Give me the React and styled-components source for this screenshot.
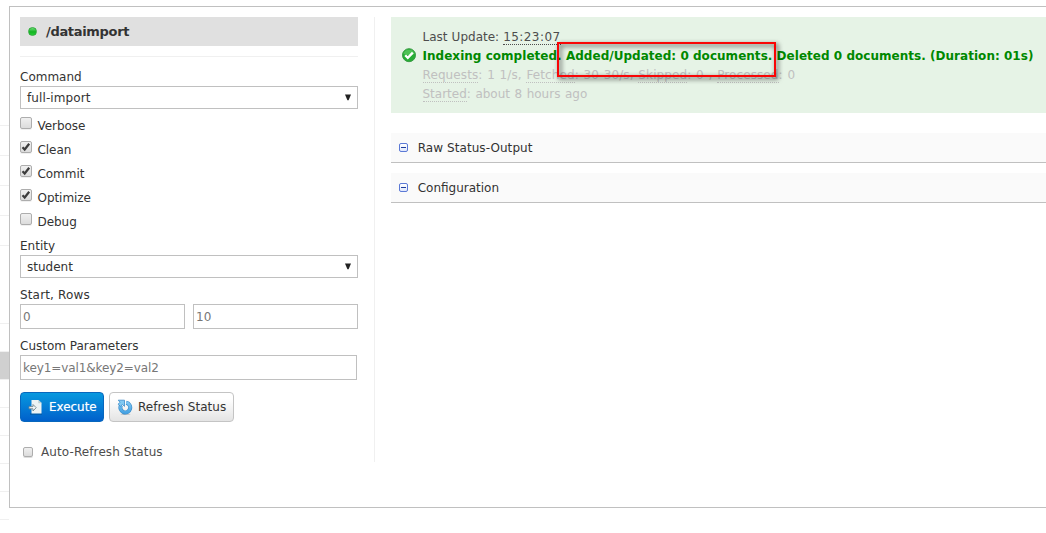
import React from "react";
import styled, { createGlobalStyle } from "styled-components";

const Global = createGlobalStyle`
  * { box-sizing: border-box; }
  body { margin: 0; background: #fff; overflow: hidden; }
`;

const Page = styled.div`
  display: flex;
  height: 533px;
  overflow: hidden;
  color: #333;
  font: 12px/18px "DejaVu Sans", Verdana, sans-serif;
`;
const Sidebar = styled.div`
  width: 9px;
  padding-top: 96px;
`;
const MenuRow = styled.div`
  height: ${(p) => p.$h}px;
  border-bottom: 1px solid ${(p) => (p.$line ? "#f0f0f0" : "transparent")};
  background: ${(p) => (p.$active ? "#d0d0d0" : "transparent")};
`;
const Panel = styled.main`
  display: flex;
  flex: 1;
  height: 502px;
  margin-top: 6px;
  padding: 10px 0 0 10px;
  border: 1px solid #c0c0c0;
  border-right: 0;
`;
const FormColumn = styled.form`
  display: flex;
  flex-direction: column;
  width: 355px;
  height: 445px;
  padding-right: 16px;
  border-right: 1px solid #f0f0f0;
`;
const Heading = styled.h2`
  display: flex;
  align-items: center;
  height: 29px;
  margin: 0 0 10px;
  padding-left: 8px;
  gap: 9px;
  background: #e0e0e0;
  font-size: 13px;
  letter-spacing: -0.32px;
`;
const StatusDot = styled.span`
  width: 9px;
  height: 9px;
  border-radius: 50%;
  border: 1px solid #2eaa3b;
  background: linear-gradient(#6bdc72, #12b322 55%, #27cf34);
`;
const Rule = styled.div`
  height: 1px;
  background: #f0f0f0;
  margin-bottom: 11px;
`;
const T = styled.span`
  letter-spacing: ${(p) => p.$ls || 0}px;
  white-space: nowrap;
`;
const Label = styled.label`
  height: 18px;
  margin-top: ${(p) => p.$mt || 0}px;
  letter-spacing: ${(p) => p.$ls || 0}px;
`;
const Select = styled.div`
  display: flex;
  align-items: center;
  justify-content: space-between;
  height: 23px;
  padding: 0 5px 0 6px;
  border: 1px solid #c0c0c0;
`;
const Checks = styled.div`
  display: flex;
  flex-direction: column;
  margin-top: 8px;
`;
const CheckRow = styled.label`
  display: flex;
  height: 24px;
  gap: 5.5px;
`;
const CheckBox = styled.span`
  display: flex;
  width: ${(p) => p.$size}px;
  height: ${(p) => p.$size}px;
  border: 1px solid #adadad;
  border-radius: 2px;
  background: linear-gradient(#f0f0f0, #dcdcdc);
  box-shadow: 0 1px 0 ${(p) => (p.$size < 12 ? "#ddd" : "#f0f0f0")};
  svg { display: block; overflow: visible; }
`;
const Fields = styled.div`
  display: grid;
  grid-template-columns: 1fr 1fr;
  gap: 8px;
`;
const Field = styled.div`
  height: 25px;
  padding: 3px 2px;
  border: 1px solid #c0c0c0;
  color: #777;
  margin-right: ${(p) => p.$inset || 0}px;
`;
const Buttons = styled.div`
  display: flex;
  gap: 5px;
  margin-top: 12px;
`;
const Button = styled.button`
  display: flex;
  align-items: center;
  width: ${(p) => p.$w}px;
  height: 30px;
  padding: 0 0 0 7px;
  gap: ${(p) => p.$gap}px;
  border: 1px solid ${(p) => (p.$primary ? "#0867bd" : "#c4c4c4")};
  border-radius: 4px;
  background: ${(p) => (p.$primary ? "linear-gradient(#0899df, #0060cb)" : "linear-gradient(#fff 20%, #e4e4e4)")};
  color: ${(p) => (p.$primary ? "#fff" : "#333")};
  text-shadow: ${(p) => (p.$primary ? "0 0 1px rgba(255, 255, 255, 0.5)" : "none")};
  font: inherit;
  white-space: nowrap;
  svg { flex: none; }
`;
const AutoRefresh = styled.label`
  display: flex;
  align-items: center;
  height: 18px;
  margin: 21px 0 0 3px;
  gap: 8px;
  color: #4d4d4d;
`;
const Content = styled.section`
  flex: 1;
  min-width: 0;
  margin-left: 16px;
`;
const Status = styled.div`
  position: relative;
  display: grid;
  grid-template-columns: 20.5px 1fr;
  grid-auto-rows: 19px;
  height: 96px;
  padding: 11px 0 0 11px;
  margin-bottom: 20px;
  background: #e6f3e6;
  line-height: 19px;
  white-space: nowrap;
`;
const Line = styled.div`
  grid-column: 2;
  color: ${(p) => p.$color};
  font-weight: ${(p) => (p.$bold ? "bold" : "normal")};
  letter-spacing: ${(p) => p.$ls || 0}px;
  word-spacing: ${(p) => p.$ws || 0}px;
`;
const Abbr = styled.abbr`
  display: inline-block;
  height: 15px;
  line-height: 15px;
  text-decoration: none;
  letter-spacing: ${(p) => (p.$ls ? `${p.$ls}px` : "inherit")};
  border-bottom: 1px dotted currentColor;
`;
const IconCell = styled.span`
  grid-column: 1;
  grid-row: 2;
  padding-top: 1px;
  svg { display: block; }
`;
const Highlight = styled.div`
  position: absolute;
  left: 166px;
  top: 25px;
  width: 219px;
  height: 35px;
  border: 2px solid #f90505;
  filter: drop-shadow(2px 2px 2.5px rgba(0, 0, 0, 0.75));
`;
const Section = styled.div`
  display: flex;
  align-items: center;
  height: 30px;
  margin-bottom: 10px;
  padding-left: 8px;
  gap: 9.7px;
  border-bottom: 1px solid #c0c0c0;
  background: #fafafa;
`;
const Collapse = styled.span`
  display: flex;
  align-items: center;
  justify-content: center;
  width: 9px;
  height: 9px;
  margin-top: -1px;
  border: 1px solid #5b79d6;
  border-radius: 2px;
  background: linear-gradient(#fff, #dfe7fb);
  &::before { content: ""; width: 5px; height: 1px; background: #1d3c9c; }
`;

const Check = () => (
  <svg width="10" height="10" viewBox="0 0 10 10">
    <path d="M1.5 5.2 L3.7 7.5 L8.2 1.8" fill="none" stroke="#3c3c3c" strokeWidth="2.2" />
  </svg>
);
const Arrow = () => (
  <svg width="8" height="8" viewBox="0 0 8 8">
    <path d="M1 0.6h6L4.6 6.3H3.4z" fill="#222" />
  </svg>
);
const ImportIcon = () => (
  <svg width="16" height="16" viewBox="0 0 16 16">
    <path d="M2 15h12" stroke="#064a80" strokeWidth="1.2" opacity=".65" />
    <path d="M3.5 1h7L13.5 4v10.5h-10z" fill="#edf4f4" />
    <path d="M10.5 1v3h3" fill="#b9cfd2" stroke="#c6d8da" strokeWidth=".6" />
    <path d="M1 7.6h4V5.5l3.2 3.2L5 12V9.8H1z" fill="#f4f8f8" stroke="#71868d" strokeWidth=".9" />
  </svg>
);
const RefreshIcon = () => (
  <svg width="16" height="16" viewBox="0 0 16 16">
    <defs>
      <linearGradient id="blue" x1="0" y1="0" x2="0" y2="1">
        <stop offset="0" stopColor="#7cc5f2" />
        <stop offset="1" stopColor="#48a4e4" />
      </linearGradient>
    </defs>
    <ellipse cx="8.5" cy="15.2" rx="5" ry=".8" fill="#c4c4c4" />
    <path d="M9.2 3.7A4.9 4.9 0 1 1 4 6.2" fill="none" stroke="#3c8cc9" strokeWidth="4" />
    <path d="M9.2 3.7A4.9 4.9 0 1 1 4 6.2" fill="none" stroke="url(#blue)" strokeWidth="2.7" />
    <path d="M1.2 1.2h6.3v6.2L5.4 5.5 3.3 7.4 1.2 5.1 3 3.2z" fill="#82c9f2" stroke="#3c8cc9" strokeWidth=".8" />
  </svg>
);
const SuccessIcon = () => (
  <svg width="14" height="15" viewBox="0 0 14 15">
    <circle cx="7" cy="7.2" r="6.5" fill="#26ad35" stroke="#3b9c45" />
    <path d="M1.4 6a5.7 5.2 0 0 1 11.2 0q-5.6 2-11.2 0z" fill="#65ce68" opacity=".65" />
    <path d="M3.2 7.2l2.6 2.7 5-5.3" fill="none" stroke="#fff" strokeWidth="2.3" />
  </svg>
);

const menu = [
  [30, 1], [30, 1], [30, 1], [30, 1], [30, 1], [78, 1], [28, 1],
  [28, 1, 1], [28, 1], [28, 1], [28, 1], [28, 1], [28, 1],
];
const options = [
  ["Verbose", false], ["Clean", true], ["Commit", true], ["Optimize", true], ["Debug", false],
];

export default function App() {
  return (
    <Page>
      <Global />
      <Sidebar>
        {menu.map(([h, line, active], i) => (
          <MenuRow key={i} $h={h} $line={line} $active={active} />
        ))}
      </Sidebar>
      <Panel>
        <FormColumn>
          <Heading><StatusDot />/dataimport</Heading>
          <Rule />
          <Label>Command</Label>
          <Select><T $ls={0.1}>full-import</T><Arrow /></Select>
          <Checks>
            {options.map(([name, on]) => (
              <CheckRow key={name}>
                <CheckBox $size={12}>{on && <Check />}</CheckBox>
                <T $ls={-0.05}>{name}</T>
              </CheckRow>
            ))}
          </Checks>
          <Label>Entity</Label>
          <Select><T>student</T><Arrow /></Select>
          <Label $mt={8} $ls={0.15}>Start, Rows</Label>
          <Fields><Field>0</Field><Field>10</Field></Fields>
          <Label $mt={8}>Custom Parameters</Label>
          <Field $inset={1}><T $ls={-0.1}>key1=val1&amp;key2=val2</T></Field>
          <Buttons>
            <Button type="button" $primary $w={84} $gap={5}><ImportIcon /><T $ls={-0.05}>Execute</T></Button>
            <Button type="button" $w={125} $gap={5}><RefreshIcon /><T $ls={0.07}>Refresh Status</T></Button>
          </Buttons>
          <AutoRefresh><CheckBox $size={10} /><T $ls={0.1}>Auto-Refresh Status</T></AutoRefresh>
        </FormColumn>
        <Content>
          <Status>
            <Line $color="#4d4d4d" $ws={0.3}>Last Update: <Abbr $ls={0.42}>15:23:07</Abbr></Line>
            <IconCell><SuccessIcon /></IconCell>
            <Line $color="#080" $bold $ls={0.03}>
              Indexing completed. Added/Updated: 0 documents. Deleted 0 documents. (Duration: 01s)
            </Line>
            <Line $color="#c0c0c0" $ls={0.1} $ws={0.8}>
              <Abbr>Requests</Abbr>: 1 1/s, <Abbr>Fetched</Abbr>: 30 30/s, <Abbr>Skipped</Abbr>: 0 , <Abbr>Processed</Abbr>: 0
            </Line>
            <Line $color="#c0c0c0" $ws={0.7}><Abbr>Started</Abbr>: about 8 hours ago</Line>
            <Highlight />
          </Status>
          <Section><Collapse /><T $ls={0.07}>Raw Status-Output</T></Section>
          <Section><Collapse /><T>Configuration</T></Section>
        </Content>
      </Panel>
    </Page>
  );
}
